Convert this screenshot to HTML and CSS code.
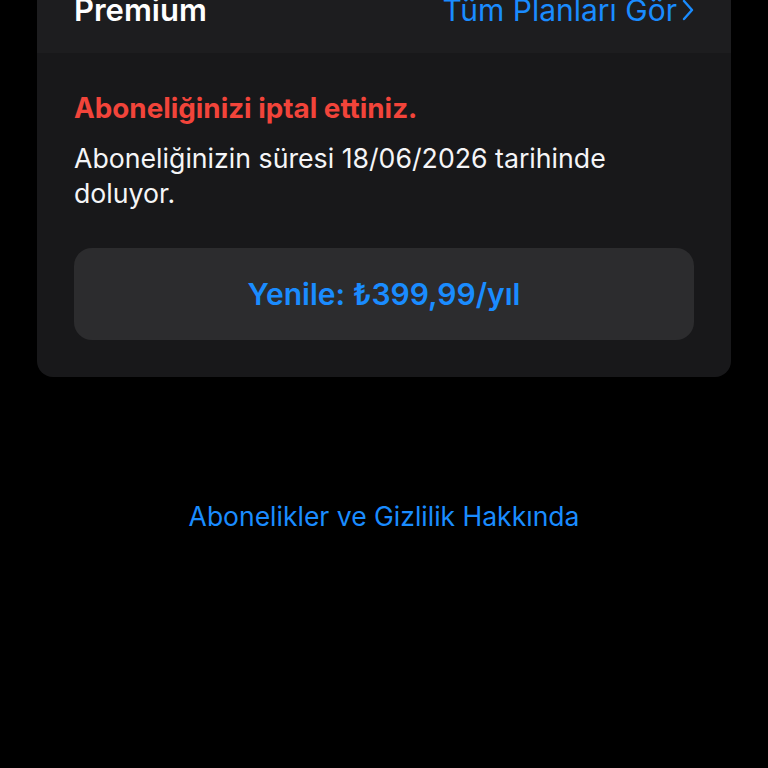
FILE: index.html
```html
<!DOCTYPE html>
<html lang="tr">
<head>
    <meta charset="UTF-8">
    <meta name="viewport" content="width=device-width, initial-scale=1.0">
    <title>Abonelik</title>
    <link rel="stylesheet" href="styles.css">
</head>
<body>

    <div class="card">
        <div class="card-head">
            <span class="plan-name">Premium</span>
            <a class="plans-link" href="#">Tüm Planları Gör<svg class="chevron" width="12" height="22" viewBox="0 0 12 22"><path d="M2 2l8 9-8 9" fill="none" stroke="currentColor" stroke-width="2.4" stroke-linecap="round" stroke-linejoin="round"/></svg></a>
        </div>
        <div class="card-body">
            <p class="status">Aboneliğinizi iptal ettiniz.</p>
            <p class="info">Aboneliğinizin süresi 18/06/2026 tarihinde doluyor.</p>
            <button class="renew">Yenile: ₺399,99/yıl</button>
        </div>
    </div>

    <a class="about-link" href="#">Abonelikler ve Gizlilik Hakkında</a>

</body>
</html>
```

FILE: styles.css
```css
body {
    font-family: Inter, "Noto Sans", sans-serif;
    background-color: #000;
    color: #fff;
    margin: 0;
    height: 100vh;
    overflow: hidden;
}

.card {
    margin: -30px 37px 0;
    background-color: #18181a;
    border-radius: 0 0 16px 16px;
    overflow: hidden;
}

.card-head {
    background-color: #1d1d1f;
    display: flex;
    justify-content: space-between;
    align-items: center;
    padding: 23px 37px 26px;
    line-height: 34px;
}

.plan-name {
    font-size: 31px;
    font-weight: 600;
}

.plans-link {
    color: #1a8cff;
    font-size: 30px;
    text-decoration: none;
    display: flex;
    align-items: center;
    gap: 5px;
}

.chevron {
    display: block;
}

.card-body {
    padding: 38px 37px 37px;
}

.status {
    margin: 0;
    color: #f2443a;
    font-size: 27.8px;
    font-weight: 700;
    line-height: 34px;
}

.info {
    margin: 16px 0 0;
    font-size: 26.7px;
    line-height: 35px;
    color: #f5f5f7;
}

.renew {
    display: block;
    width: 100%;
    height: 92px;
    margin-top: 37px;
    border: none;
    border-radius: 18px;
    background-color: #2c2c2e;
    color: #1a8cff;
    font-family: inherit;
    font-size: 30px;
    font-weight: 600;
    cursor: pointer;
}

.about-link {
    display: block;
    margin-top: 122px;
    text-align: center;
    color: #1a8cff;
    font-size: 26.5px;
    line-height: 34px;
    text-decoration: none;
}
```
